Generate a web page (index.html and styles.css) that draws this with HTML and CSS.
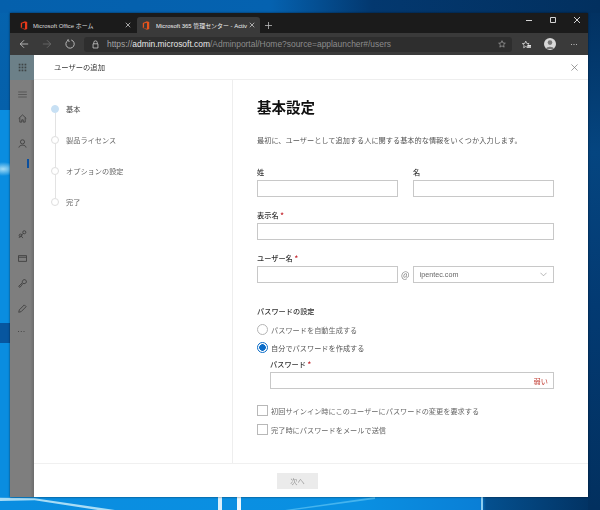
FILE: index.html
```html
<!DOCTYPE html>
<html lang="ja">
<head>
<meta charset="utf-8">
<title>ユーザーの追加</title>
<link rel="stylesheet" href="styles.css">
</head>
<body>
<div class="streak s1"></div><div class="streak s2"></div><div class="streak s3"></div><div class="streak s4"></div><div class="streak s5"></div>
<div class="window">
  <div class="titlebar">
    <div class="tab">
      <svg class="office" viewBox="0 0 12 14"><path d="M1 3 7.500 .5 11 1.500V12.500L7.500 13.500 1 11 7.500 12V2.800L3 3.800V10.200L1 11Z" fill="#e6391a"/></svg>
      <span class="tabtext">Microsoft Office ホーム</span>
      <svg class="tabx" viewBox="0 0 8 8"><path d="M1 1 7 7M7 1 1 7"/></svg>
    </div>
    <div class="tab active">
      <svg class="office" viewBox="0 0 12 14"><path d="M1 3 7.500 .5 11 1.500V12.500L7.500 13.500 1 11 7.500 12V2.800L3 3.800V10.200L1 11Z" fill="#e8541c"/></svg>
      <span class="tabtext">Microsoft 365 管理センター - Activ</span>
      <svg class="tabx" viewBox="0 0 8 8"><path d="M1 1 7 7M7 1 1 7"/></svg>
    </div>
    <svg class="newtab" viewBox="0 0 9 9"><path d="M4.500 0V9M0 4.500H9"/></svg>
    <div class="winctrl">
      <svg viewBox="0 0 8 8"><path d="M1 4.500H7"/></svg>
      <svg viewBox="0 0 8 8"><path d="M1.500 1.500H6.500V6.500H1.500Z"/></svg>
      <svg viewBox="0 0 8 8"><path d="M1 1 7 7M7 1 1 7"/></svg>
    </div>
  </div>
  <div class="toolbar">
    <svg class="nav" viewBox="0 0 12 12"><path d="M11 6H1.500M6 1.500 1.500 6 6 10.500"/></svg>
    <svg class="nav dim" viewBox="0 0 12 12"><path d="M1 6H10.500M6 1.500 10.500 6 6 10.500"/></svg>
    <svg class="nav" viewBox="0 0 12 12"><path d="M7.500 1.200A5 5 0 1 1 3.500 1.700M3.800 .2 3.500 2.200 5.500 2.800"/></svg>
    <div class="address">
      <svg class="lock" viewBox="0 0 10 12"><path d="M2.500 5V3.300A2.500 2.500 0 0 1 7.500 3.300V5M1.500 5H8.500V11H1.500Z"/></svg>
      <span class="url"><span class="urlb">https://</span><span class="urlw">admin.microsoft.com</span>/Adminportal/Home?source=applauncher#/users</span>
      <svg class="star" viewBox="0 0 12 12"><path d="M6 1 7.500 4.500 11 4.800 8.400 7.100 9.200 10.700 6 8.800 2.800 10.700 3.600 7.100 1 4.800 4.500 4.500Z"/></svg>
    </div>
    <svg class="fav" viewBox="0 0 12 12"><path d="M5 1.500 6.300 4.500 9.500 4.800 7.200 7 7.800 10.300 5 8.600 2.200 10.300 2.800 7 .5 4.800 3.700 4.500Z" stroke-width="1"/><path d="M8 7.500H12M8 9.500H12"/></svg>
    <div class="avatar"><svg viewBox="0 0 12 12"><circle cx="6" cy="4.600" r="2.300" fill="#777"/><path d="M2 11C2.500 8 9.500 8 10 11Z" fill="#777"/></svg></div>
    <span class="dots">···</span>
  </div>
  <div class="app">
    <aside class="rail">
      <div class="launcher"><svg class="ri" viewBox="0 0 10 10"><g fill="#3f4446"><rect x=".8" y=".8" width="1.900" height="1.900"/><rect x="4" y=".8" width="1.900" height="1.900"/><rect x="7.300" y=".8" width="1.900" height="1.900"/><rect x=".8" y="4" width="1.900" height="1.900"/><rect x="4" y="4" width="1.900" height="1.900"/><rect x="7.300" y="4" width="1.900" height="1.900"/><rect x=".8" y="7.300" width="1.900" height="1.900"/><rect x="4" y="7.300" width="1.900" height="1.900"/><rect x="7.300" y="7.300" width="1.900" height="1.900"/></g></svg></div>
      <svg class="ri r-menu" viewBox="0 0 10 10"><path d="M.2 2.200H9.800M.2 5H9.800M.2 7.800H9.800"/></svg>
      <svg class="ri r-home" viewBox="0 0 10 10"><path d="M.8 5 5 1 9.200 5M2 4.200V9H4.200V6.500H5.800V9H8V4.200"/></svg>
      <svg class="ri r-user" viewBox="0 0 10 10"><circle cx="5" cy="3.200" r="2.300"/><path d="M1 9.500C1.300 6 8.700 6 9 9.500"/></svg>
      <div class="marker"></div>
      <svg class="ri r-key" viewBox="0 0 10 10"><circle cx="7" cy="2.500" r="1.700"/><circle cx="2.800" cy="6" r="1.500"/><path d="M5.800 3.700 1 8.800M3.800 7 5.500 9"/></svg>
      <svg class="ri r-card" viewBox="0 0 10 10"><path d="M.5 1.800H9.500V8.200H.5ZM.5 3.600H9.500"/></svg>
      <svg class="ri r-tool" viewBox="0 0 10 10"><path d="M6.500.7C8.300.4 9.600 1.700 9.300 3.500 8.800 5 7 5.600 5.600 4.800L2.200 9.300 .7 8.200 4.800 4.200C4.500 2.700 5.300 1.100 6.500.7Z"/></svg>
      <svg class="ri r-pen" viewBox="0 0 10 10"><path d="M.8 9.200 1.500 6.500 7 1 9 3 3.500 8.500Z"/></svg>
      <span class="r-dots">···</span>
    </aside>
    <main class="panel">
      <header class="phead">
        <span class="ptitle">ユーザーの追加</span>
        <svg class="pclose" viewBox="0 0 8 8"><path d="M.5.5 7.500 7.500M7.500.5.5 7.500"/></svg>
      </header>
      <div class="pbody">
        <nav class="steps">
          <div class="step current"><i class="dot"></i><span>基本</span></div>
          <div class="line"></div>
          <div class="step"><i class="dot"></i><span>製品ライセンス</span></div>
          <div class="line"></div>
          <div class="step"><i class="dot"></i><span>オプションの設定</span></div>
          <div class="line"></div>
          <div class="step"><i class="dot"></i><span>完了</span></div>
        </nav>
        <section class="form">
          <h1>基本設定</h1>
          <p class="desc">最初に、ユーザーとして追加する人に関する基本的な情報をいくつか入力します。</p>
          <div class="row names">
            <div class="field"><label>姓</label><div class="input"></div></div>
            <div class="field"><label>名</label><div class="input"></div></div>
          </div>
          <div class="field display"><label>表示名 <b>*</b></label><div class="input"></div></div>
          <div class="field uname">
            <label>ユーザー名 <b>*</b></label>
            <div class="row">
              <div class="input"></div>
              <span class="at">@</span>
              <div class="input select"><span>ipentec.com</span><svg viewBox="0 0 8 5"><path d="M.5.5 4 4 7.500.5"/></svg></div>
            </div>
          </div>
          <h2>パスワードの設定</h2>
          <div class="radio"><i class="rb"></i><span>パスワードを自動生成する</span></div>
          <div class="radio on"><i class="rb"></i><span>自分でパスワードを作成する</span></div>
          <div class="field pw">
            <label>パスワード <b>*</b></label>
            <div class="input weak"><span>弱い</span></div>
          </div>
          <div class="check first"><i class="cb"></i><span>初回サインイン時にこのユーザーにパスワードの変更を要求する</span></div>
          <div class="check"><i class="cb"></i><span>完了時にパスワードをメールで送信</span></div>
        </section>
      </div>
      <footer class="pfoot"><div class="next">次へ</div></footer>
    </main>
  </div>
</div>
</body>
</html>
```
FILE: styles.css
```css
* { box-sizing: border-box; }
html, body { margin: 0; height: 100%; }
body {
  width: 600px; height: 510px; overflow: hidden; position: relative;
  font-family: "Noto Sans CJK JP", "Noto Sans", sans-serif;
  background:
    radial-gradient(ellipse 14px 7px at 3px 169px, #a5dcf5 0, rgba(120,205,245,0) 100%) 0 0/10px 100% no-repeat,
    linear-gradient(#07569f, #07569f) 0 323px/10px 20px no-repeat,
    linear-gradient(90deg, #0560ac 0, #0562b0 45%, #03386f 62%, #02305f 100%) 0 0/100% 13px no-repeat,
    linear-gradient(#0563ae, #0560aa) 0 0/10px 110px no-repeat,
    linear-gradient(#02305f 0, #054580 30%, #033a72 60%, #02305f 100%) 588px 0/12px 100% no-repeat,
    linear-gradient(90deg, #0a8de0 0, #0a90e2 60%, #0a7fd6 80%, #04508f 81%, #02305f 100%) 0 497px/100% 13px no-repeat,
    #0a8de0;
}
.streak { position: absolute; }
.s1 { left: 0; top: 497px; width: 115px; height: 13px; clip-path: polygon(0 5%, 30% 10%, 100% 100%, 85% 100%, 30% 25%, 0 30%); background: #a8dcf5; }
.s2 { left: 218px; top: 497px; width: 4px; height: 13px; background: #dceffa; }
.s3 { left: 237px; top: 497px; width: 4px; height: 13px; background: #eef8fd; }
.s4 { left: 481px; top: 497px; width: 2px; height: 13px; background: #8ccdf0; }
.s5 { left: 285px; top: 497px; width: 90px; height: 13px; clip-path: polygon(100% 0, 100% 15%, 10% 100%, 0 100%); background: #45b4ee; }

.window {
  position: absolute; left: 10px; top: 13px; width: 578px; height: 484px;
  display: flex; flex-direction: column; background: #1c1c1c;
  box-shadow: 0 0 2px rgba(0,0,0,.6);
  filter: blur(.25px);
}
.titlebar { height: 20px; display: flex; align-items: flex-end; background: #1b1b1b; flex: none; }
.tab {
  width: 123px; height: 16px; display: flex; align-items: center; padding-left: 10px;
  color: #dcdcdc; font-size: 5.950px; white-space: nowrap; font-family: "Liberation Sans", "Noto Sans CJK JP", sans-serif;
}
.tab.active { background: #3a3a3a; color: #f0f0f0; border-radius: 3px 3px 0 0; margin-left: 4px; padding-left: 5px; }
.office { width: 8px; height: 9px; flex: none; margin-right: 5px; }
.active .office { margin-right: 6px; }
.tabtext { flex: 1; }
.tabx { width: 6px; height: 6px; flex: none; margin: 0 2px 0 2px; fill: none; stroke: #d0d0d0; stroke-width: 1; }
.active .tabx { margin-right: 5px; }
.newtab { width: 7px; height: 7px; margin: 0 0 4.500px 5px; fill: none; stroke: #bdbdbd; stroke-width: 1; }
.winctrl { margin-left: auto; display: flex; gap: 16px; align-self: flex-start; padding: 3px 7px 0 0; }
.winctrl svg { width: 8px; height: 8px; fill: none; stroke: #d4d4d4; stroke-width: 1; }

.toolbar { height: 22px; background: #3a3a3a; display: flex; align-items: center; flex: none; }
.nav { width: 10px; height: 10px; fill: none; stroke: #c8c8c8; stroke-width: 1; margin-left: 9px; margin-right: 4px; flex: none; }
.nav.dim { stroke: #6e6e6e; }
.nav:nth-child(3) { margin-right: 9px; stroke: #d0d0d0; }
.address { width: 428px; height: 15px; background: #2e2e2e; border-radius: 3px; display: flex; align-items: center; padding-left: 8px; flex: none; }
.lock { width: 7px; height: 9px; fill: none; stroke: #d0d0d0; stroke-width: 1.100; flex: none; margin-right: 8px; }
.url { color: #8c8c8c; font: 8.430px "Liberation Sans", sans-serif; white-space: nowrap; flex: 1; }
.urlb { color: #a4a4a4; }
.urlw { color: #e8e8e8; }
.star { width: 8px; height: 8px; fill: none; stroke: #a8a8a8; stroke-width: 1; margin-right: 6px; flex: none; }
.fav { width: 9px; height: 9px; fill: none; stroke: #e8e8e8; stroke-width: 1.400; margin-left: 10px; flex: none; }
.avatar { width: 12px; height: 12px; border-radius: 50%; background: #d8d8d8; margin-left: 13px; overflow: hidden; flex: none; }
.avatar svg { display: block; }
.dots { color: #c8c8c8; font: 9px "Liberation Sans", sans-serif; margin-left: 14px; letter-spacing: -.5px; }

.app { flex: 1; display: flex; min-height: 0; }
.rail { width: 24px; flex: none; background: linear-gradient(90deg, #7e7e7e 0, #7e7e7e 85%, #6c6c6c 100%); position: relative; }
.launcher { height: 25px; background: #6c8088; display: flex; align-items: center; justify-content: center; }
.ri { width: 9px; height: 9px; fill: none; stroke: #3f3f3f; stroke-width: 1; display: block; }
.launcher .ri { stroke: none; }
.rail > .ri { position: absolute; left: 7.500px; }
.r-menu { top: 35px; stroke: #555; }
.r-home { top: 59px; }
.r-user { top: 84px; }
.marker { position: absolute; left: 17px; top: 104px; width: 2px; height: 9px; background: #0a4f9e; }
.r-key { top: 175px; }
.r-card { top: 199px; }
.r-tool { top: 224px; }
.r-pen { top: 249px; }
.r-dots { position: absolute; left: 7px; top: 271px; color: #3f3f3f; font: 9px/10px "Liberation Sans", sans-serif; letter-spacing: -.3px; }

.panel { flex: 1; background: #fff; display: flex; flex-direction: column; min-width: 0; color: #333; }
.phead { height: 25px; flex: none; border-bottom: 1px solid #eee; display: flex; align-items: center; padding: 0 10px 0 20px; justify-content: space-between; }
.ptitle { font-size: 7.300px; color: #333; }
.pclose { width: 7px; height: 7px; fill: none; stroke: #777; stroke-width: .8; }
.pbody { flex: 1; display: flex; min-height: 0; }
.steps { width: 199px; flex: none; border-right: 1px solid #eee; padding: 25px 0 0 17px; }
.step { display: flex; align-items: center; height: 8px; font-size: 7.200px; color: #666; }
.step.current { color: #444; }
.dot { width: 8px; height: 8px; border-radius: 50%; border: 1px solid #dedede; margin-right: 7px; flex: none; background: #fff; }
.current .dot { background: #c7e0f4; border-color: #c7e0f4; }
.line { width: 1px; height: 23px; background: #e3e3e3; margin-left: 3.500px; }
.form { flex: 1; padding: 18px 34px 0 24px; min-width: 0; }
h1 { margin: 0; font-size: 14.500px; line-height: 18px; font-weight: 700; color: #111; }
.desc { margin: 19px 0 0; font-size: 7.200px; line-height: 11px; color: #555; white-space: nowrap; }
.row { display: flex; gap: 15px; }
.row.names { margin-top: 21px; }
.row .field, .row .input { flex: 1 1 50%; min-width: 0; }
.field label { display: block; font-size: 7.200px; line-height: 10px; color: #333; font-weight: 500; margin-bottom: 3px; }
label b { color: #c4262e; font-weight: 700; }
.input { height: 17px; border: 1px solid #c8c8c8; background: #fff; display: flex; align-items: center; font-size: 7.200px; }
.display { margin-top: 13px; }
.uname { margin-top: 13px; }
.at { width: 0; flex: none; margin: 0 -7.500px; font-size: 9px; color: #777; display: flex; justify-content: center; align-items: center; }
.select { padding: 0 6px; justify-content: space-between; color: #666; font-family: "Liberation Sans", sans-serif; }
.select svg { width: 7px; height: 5px; fill: none; stroke: #888; stroke-width: .7; }
h2 { margin: 23px 0 0; font-size: 7.200px; line-height: 10px; font-weight: 500; color: #333; }
.radio { display: flex; align-items: center; height: 11px; margin-top: 8px; font-size: 7.200px; color: #666; }
.radio.on { margin-top: 7px; color: #555; }
.rb { width: 11px; height: 11px; border-radius: 50%; border: 1px solid #b5b5b5; margin-right: 3px; flex: none; }
.on .rb { border-color: #0a6cc8; background: radial-gradient(circle, #0a6cc8 0, #0a6cc8 3px, #fff 3.600px); }
.pw { margin: 6px 0 0 13px; }
.pw label { margin-bottom: 3px; }
.weak { justify-content: flex-end; padding-right: 5px; color: #c0392f; }
.check { display: flex; align-items: center; height: 11px; margin-top: 8px; font-size: 7.200px; color: #666; }
.check.first { margin-top: 16px; }
.cb { width: 11px; height: 11px; border: 1px solid #b8b8b8; margin-right: 3px; flex: none; }
.pfoot { height: 34px; flex: none; border-top: 1px solid #f0f0f0; padding: 9px 0 0 243px; }
.next { width: 41px; height: 16px; background: #ebebeb; color: #9a9a9a; font-size: 7.200px; display: flex; align-items: center; justify-content: center; }
```
